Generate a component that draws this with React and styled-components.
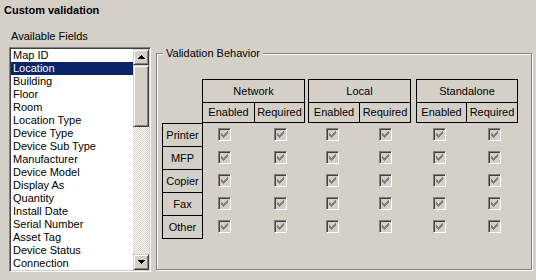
import React from 'react';
import styled, { createGlobalStyle } from 'styled-components';

const Global = createGlobalStyle`
  html, body { margin: 0; padding: 0; background: #d4d0c8; }
  body { font-family: "Liberation Sans", Arial, sans-serif; font-size: 11px; color: #000; }
`;

const Dialog = styled.div`
  width: 536px;
  height: 280px;
  box-sizing: border-box;
  padding: 4px 0 0 4px;
  background: #d4d0c8;
  overflow: hidden;
`;

const Title = styled.div`
  font-weight: bold;
  line-height: 13px;
  height: 13px;
`;

const Main = styled.div`
  display: flex;
  align-items: flex-start;
  margin-top: 13px;
  padding-left: 5px;
`;

const LeftCol = styled.div`
  display: flex;
  flex-direction: column;
`;

const FieldLabel = styled.div`
  line-height: 13px;
  padding-left: 2px;
  margin-bottom: 4px;
`;

const ListBox = styled.div`
  width: 142px;
  height: 225px;
  box-sizing: border-box;
  border: 1px solid;
  border-color: #808080 #fff #fff #808080;
  box-shadow: inset 1px 1px 0 #404040, inset -1px -1px 0 #d4d0c8;
  padding: 1px;
  background: #fff;
  display: flex;
`;

const Items = styled.div`
  flex: 1;
  overflow: hidden;
`;

const Item = styled.div`
  height: 13px;
  line-height: 13px;
  padding-left: 2px;
  white-space: nowrap;
  background: ${p => (p.$selected ? '#0a246a' : 'transparent')};
  color: ${p => (p.$selected ? '#fff' : '#000')};
`;

const ScrollBar = styled.div`
  width: 16px;
  display: flex;
  flex-direction: column;
`;

const Raised = styled.div`
  box-sizing: border-box;
  background: #d4d0c8;
  border: 1px solid;
  border-color: #d4d0c8 #404040 #404040 #d4d0c8;
  box-shadow: inset 1px 1px 0 #fff, inset -1px -1px 0 #808080;
  display: flex;
  align-items: center;
  justify-content: center;
  height: ${p => p.$h}px;
  flex: none;
`;

const Track = styled.div`
  flex: 1;
  background: repeating-conic-gradient(#fff 0% 25%, #d4d0c8 0% 50%) 0 0 / 2px 2px;
`;

const GroupBox = styled.fieldset`
  margin: 17px 0 0 5px;
  padding: 0;
  min-width: 0;
  width: 376px;
  height: 223px;
  box-sizing: border-box;
  border: 1px solid #808080;
  box-shadow: 1px 1px 0 #fff, inset 1px 1px 0 #fff;
`;

const Legend = styled.legend`
  margin-left: 6px;
  padding: 0 3px;
  line-height: 13px;
  font-size: 11px;
  background: #d4d0c8;
`;

const Matrix = styled.div`
  display: flex;
  align-items: flex-start;
  margin: 19px 0 0 5px;
`;

const RowHeads = styled.div`
  display: flex;
  flex-direction: column;
  width: 41px;
  margin-top: 44px;
`;

const BoxCell = styled.div`
  box-sizing: border-box;
  border: 1px solid #000;
  display: flex;
  align-items: center;
  justify-content: center;
  line-height: 13px;
  white-space: nowrap;
`;

const RowHead = styled(BoxCell)`
  height: 24px;
  & + & { margin-top: -1px; }
`;

const ColGroup = styled.div`
  display: flex;
  flex-direction: column;
  width: ${p => p.$w}px;
  margin-left: ${p => p.$gap}px;
`;

const GroupHead = styled(BoxCell)`
  height: 24px;
`;

const SubRow = styled.div`
  display: grid;
  grid-template-columns: ${p => p.$first}px 1fr;
  margin-top: -1px;
`;

const SubHead = styled(BoxCell)`
  height: 21px;
  border-left-width: ${p => (p.$first ? 1 : 0)}px;
`;

const CheckRow = styled.div`
  display: grid;
  grid-template-columns: ${p => p.$first}px 1fr;
  height: 23px;
`;

const CheckCell = styled.div`
  padding: 5px 0 0 ${p => p.$off}px;
`;

const CheckBox = styled.span`
  display: flex;
  width: 13px;
  height: 13px;
  box-sizing: border-box;
  border: 1px solid;
  border-color: #808080 #fff #fff #808080;
  box-shadow: inset 1px 1px 0 #404040, inset -1px -1px 0 #d4d0c8;
  background: #d4d0c8;
  align-items: center;
  justify-content: center;
`;

const Arrow = ({ down }) => (
  <svg width="7" height="4" viewBox="0 0 7 4" shapeRendering="crispEdges">
    <path
      fill="#000"
      d={
        down
          ? 'M0 0h7v1h-7zM1 1h5v1h-5zM2 2h3v1h-3zM3 3h1v1h-1z'
          : 'M3 0h1v1h-1zM2 1h3v1h-3zM1 2h5v1h-5zM0 3h7v1h-7z'
      }
    />
  </svg>
);

const Check = () => (
  <CheckBox>
    <svg width="7" height="7" viewBox="0 0 7 7" shapeRendering="crispEdges">
      <path
        fill="#808080"
        d="M6 0h1v1h-1zM5 1h2v1h-2zM0 2h1v1h-1zM4 2h3v1h-3zM0 3h2v1h-2zM3 3h3v1h-3zM0 4h5v1h-5zM1 5h3v1h-3zM2 6h1v1h-1z"
      />
    </svg>
  </CheckBox>
);

const fields = [
  'Map ID', 'Location', 'Building', 'Floor', 'Room', 'Location Type', 'Device Type',
  'Device Sub Type', 'Manufacturer', 'Device Model', 'Display As', 'Quantity',
  'Install Date', 'Serial Number', 'Asset Tag', 'Device Status', 'Connection',
];

const devices = ['Printer', 'MFP', 'Copier', 'Fax', 'Other'];

const groups = [
  { name: 'Network', gap: -1, w: 103, first: 53, offs: [16, 19] },
  { name: 'Local', gap: 3, w: 103, first: 52, offs: [18, 19] },
  { name: 'Standalone', gap: 5, w: 102, first: 51, offs: [17, 21] },
];

export default function App() {
  return (
    <>
      <Global />
      <Dialog>
        <Title>Custom validation</Title>
        <Main>
          <LeftCol>
            <FieldLabel>Available Fields</FieldLabel>
            <ListBox>
              <Items>
                {fields.map(f => (
                  <Item key={f} $selected={f === 'Location'}>{f}</Item>
                ))}
              </Items>
              <ScrollBar>
                <Raised $h={16}><Arrow /></Raised>
                <Raised $h={62} />
                <Track />
                <Raised $h={16}><Arrow down /></Raised>
              </ScrollBar>
            </ListBox>
          </LeftCol>
          <GroupBox>
            <Legend>Validation Behavior</Legend>
            <Matrix>
              <RowHeads>
                {devices.map(d => <RowHead key={d}>{d}</RowHead>)}
              </RowHeads>
              {groups.map(g => (
                <ColGroup key={g.name} $w={g.w} $gap={g.gap}>
                  <GroupHead>{g.name}</GroupHead>
                  <SubRow $first={g.first}>
                    <SubHead $first>Enabled</SubHead>
                    <SubHead>Required</SubHead>
                  </SubRow>
                  {devices.map(d => (
                    <CheckRow key={d} $first={g.first}>
                      <CheckCell $off={g.offs[0]}><Check /></CheckCell>
                      <CheckCell $off={g.offs[1]}><Check /></CheckCell>
                    </CheckRow>
                  ))}
                </ColGroup>
              ))}
            </Matrix>
          </GroupBox>
        </Main>
      </Dialog>
    </>
  );
}
